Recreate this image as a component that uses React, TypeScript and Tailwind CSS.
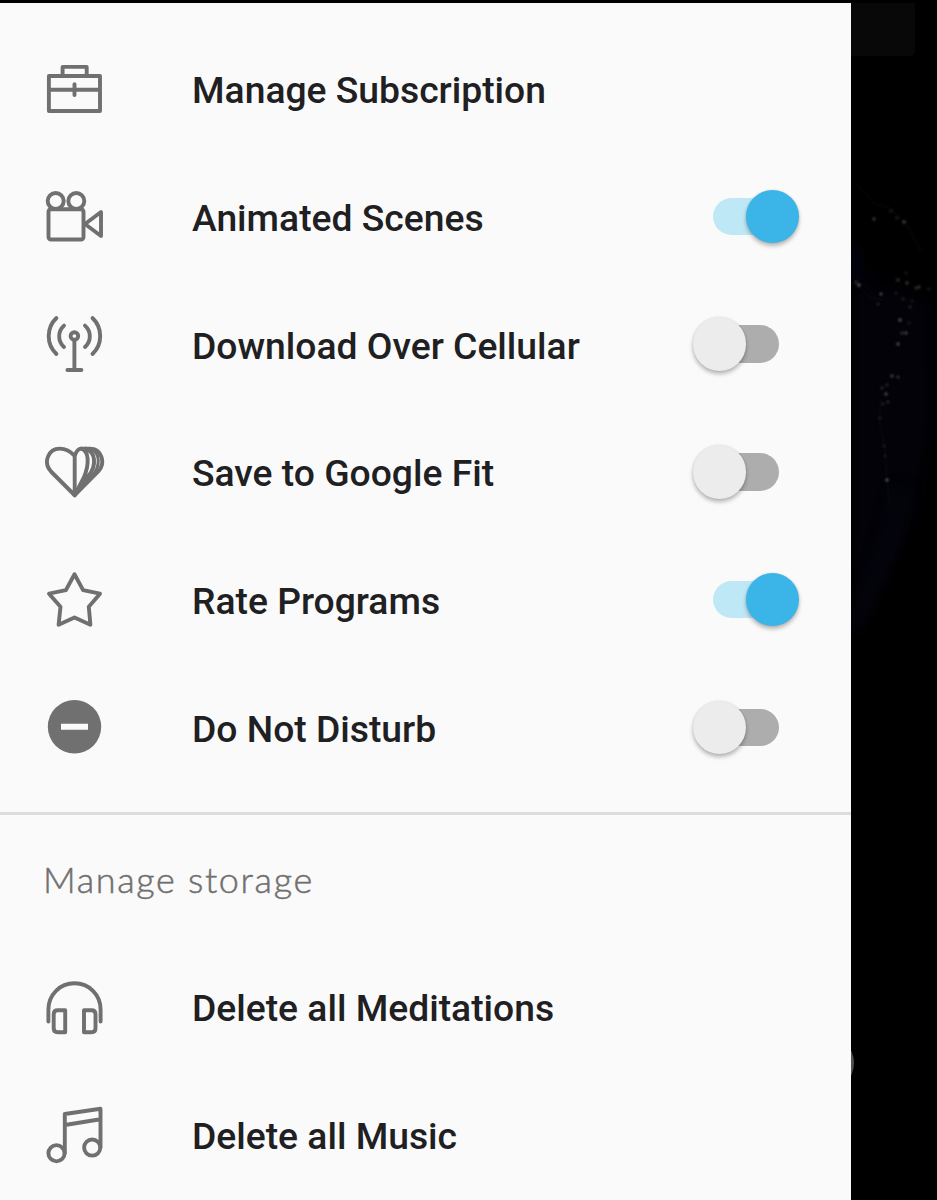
import { useState, type ReactNode } from "react";

const stroke = {
  fill: "none",
  stroke: "#707070",
  strokeWidth: 3.9,
  strokeLinecap: "round" as const,
  strokeLinejoin: "round" as const,
};

function Icon({ top, children }: { top: number; children: ReactNode }) {
  return (
    <svg className="size-16 shrink-0" viewBox={`12 ${top} 64 64`} {...stroke} aria-hidden="true">
      {children}
    </svg>
  );
}

const Briefcase = () => (
  <Icon top={7.5}>
    <path d="M18.9 25.5H70V60.5H18.9ZM18.9 39.3H70M32.6 25V16.4H56.7V25" />
    <path d="M44.5 33.7V44.5" />
  </Icon>
);

const Camera = () => (
  <Icon top={5.25}>
    <circle cx="25.7" cy="21.3" r="8" />
    <circle cx="46.3" cy="21.3" r="8" />
    <rect x="18.5" y="29.5" width="35" height="30.3" rx="2.5" />
    <path d="M55 44.3L71 32.3V56.2Z" />
  </Icon>
);

const Antenna = () => (
  <Icon top={8}>
    <circle cx="44.4" cy="31" r="3.8" />
    <path d="M44.4 35V65M37.4 65H51.4" />
    <path d="M34 20.6A14.3 14.3 0 0 0 34 42M55 20.6A14.3 14.3 0 0 1 55 42" />
    <path d="M26.4 13A24.9 24.9 0 0 0 26.4 49M62.5 13A24.9 24.9 0 0 1 62.5 49" />
  </Icon>
);

const Heart = () => (
  <Icon top={5.75}>
    <path d="M44.7 60L21.2 36.5C12.5 27 18.5 13.4 29.7 13.4C36.5 13.4 41 16.5 44.7 20.8V60L68 36.5C76.5 27 71 13.4 60 13.4H51.2C48.5 13.4 46.2 16 44.7 20.8" />
    <path d="M51.2 13.4C59 15.5 59.5 28.5 54 42L44.7 60M55.5 13.4C66 17 66.5 30 59 40L44.7 60" />
    <path strokeWidth="3" d="M60 13.4C70.5 17.5 71 31 61.5 41L44.7 60" />
  </Icon>
);

const Star = () => (
  <Icon top={8.5}>
    <path d="M44.5 13.8L53.1 29.6L70 33.2L58.8 46.3L60.4 64.2L44.5 57L28.6 64.2L30.5 46.3L19 33.2L35.9 29.6Z" />
  </Icon>
);

const Minus = () => (
  <Icon top={6.25}>
    <circle cx="44.5" cy="37" r="26.7" fill="#707070" stroke="none" />
    <rect x="31" y="34" width="27" height="6" fill="#fafafa" stroke="none" />
  </Icon>
);

const Headphones = () => (
  <Icon top={9.5}>
    <path d="M18.4 55V43.2C18.4 28 30 16.8 44.5 16.8S70.6 28 70.6 43.2V55" />
    <path d="M35.2 43.8V65.7H27.7Q23.7 65.7 23.7 61.7V47.8Q23.7 43.8 27.7 43.8ZM54 43.8V65.7H61.5Q65.5 65.7 65.5 61.7V47.8Q65.5 43.8 61.5 43.8Z" />
  </Icon>
);

const Music = () => (
  <Icon top={7.25}>
    <circle cx="26.5" cy="57.5" r="8.1" />
    <circle cx="62.2" cy="51.8" r="8.1" />
    <path d="M34.8 57.5V18.2L70.5 13V51.8M35 29.2L70.4 23.5" />
  </Icon>
);

function Toggle({ initial, label }: { initial: boolean; label: string }) {
  const [on, setOn] = useState(initial);
  return (
    <button
      role="switch"
      aria-checked={on}
      aria-label={label}
      onClick={() => setOn(!on)}
      className="relative mb-[1.5px] h-[54px] w-[108px] shrink-0"
    >
      <span
        className={`absolute top-[8px] left-[21px] h-[37.5px] w-[66px] rounded-full ${on ? "bg-[#bfe8f6]" : "bg-[#adadad]"}`}
      />
      <span
        className={`absolute top-0 size-[53.4px] rounded-full shadow-[0_3px_4px_rgba(0,0,0,0.27),0_0_2px_rgba(0,0,0,0.12)] ${on ? "left-[54px] bg-[#3bb5e8]" : "left-[0.5px] bg-[#ececec]"}`}
      />
    </button>
  );
}

type Item = { label: string; icon: ReactNode; on?: boolean };

const settings: Item[] = [
  { label: "Manage Subscription", icon: <Briefcase /> },
  { label: "Animated Scenes", icon: <Camera />, on: true },
  { label: "Download Over Cellular", icon: <Antenna />, on: false },
  { label: "Save to Google Fit", icon: <Heart />, on: false },
  { label: "Rate Programs", icon: <Star />, on: true },
  { label: "Do Not Disturb", icon: <Minus />, on: false },
];

const storage: Item[] = [
  { label: "Delete all Meditations", icon: <Headphones /> },
  { label: "Delete all Music", icon: <Music /> },
];

function Row({ label, icon, on }: Item) {
  return (
    <li className="flex h-[127.75px] items-center pr-[51px] pl-[42px]">
      {icon}
      <span className="ml-[86px] flex-1 pt-[2px] text-[37.25px] leading-none font-medium whitespace-nowrap text-[#202022]">
        {label}
      </span>
      {on !== undefined && <Toggle initial={on} label={label} />}
    </li>
  );
}

const lights = [
  [37, 219, 0.35], [60, 218, 0.18], [67, 222, 0.4], [22, 285, 0.55], [44, 294, 0.4],
  [61, 280, 0.3], [70, 283, 0.32], [82, 287, 0.3], [79, 288, 0.25], [92, 289, 0.16],
  [63, 320, 0.5], [69, 333, 0.4], [65, 333, 0.28], [61, 344, 0.45], [55, 376, 0.38],
  [61, 377, 0.28], [49, 394, 0.42], [45, 388, 0.22], [51, 402, 0.22], [46, 404, 0.18],
  [66, 299, 0.18], [73, 307, 0.2], [59, 293, 0.15], [72, 323, 0.15], [50, 480, 0.5],
  [43, 418, 0.15], [47, 446, 0.15], [48, 456, 0.13], [54, 211, 0.17], [41, 304, 0.18],
  [50, 385, 0.2], [19, 282, 0.25], [69, 273, 0.13], [75, 301, 0.12],
];

function NightEarth() {
  return (
    <svg className="h-[700px] w-[86px]" viewBox="14 0 86 700" aria-hidden="true">
      <defs>
        <filter id="haze" x="-50%" y="-30%" width="200%" height="160%" colorInterpolationFilters="sRGB">
          <feGaussianBlur stdDeviation="8" />
        </filter>
        <filter id="glow" x="-100%" y="-100%" width="300%" height="300%" colorInterpolationFilters="sRGB">
          <feGaussianBlur stdDeviation="0.8" />
        </filter>
      </defs>
      <path d="M0 0H78V51Q78 56 73 56H0Z" fill="#080808" />
      <path filter="url(#haze)" fill="#020208" d="M14 240L40 290L62 285L92 300L96 410L80 520L50 580L14 640Z" />
      <path filter="url(#haze)" fill="none" stroke="#05050e" strokeWidth="10" d="M64 490Q58 550 14 632" />
      <path filter="url(#haze)" fill="#04041a" d="M12 235L22 255L16 280H12Z" />
      <path
        filter="url(#glow)"
        fill="none"
        stroke="#0e0e13"
        strokeWidth="1"
        d="M18 183L38 204L52 208L68 222L84 251M18 283L32 297L46 300M44 400L42 420L48 448L50 481L53 506"
      />
      <g filter="url(#glow)" fill="#ada49c">
        {lights.map(([x, y, opacity]) => (
          <circle key={`${x}-${y}`} cx={x} cy={y} r="1.7" opacity={opacity} />
        ))}
      </g>
    </svg>
  );
}

export default function App() {
  return (
    <div className="flex h-[1200px] w-[937px] overflow-hidden bg-black pt-[3px] font-['Roboto',sans-serif]">
      <main className="w-[851px] shrink-0 bg-[#fafafa] pt-[22.8px]">
        <ul>
          {settings.map((item) => (
            <Row key={item.label} {...item} />
          ))}
        </ul>
        <hr className="mt-[19.8px] h-[3px] border-0 bg-[#dcdcdc]" />
        <h2 className="mt-[40.5px] ml-[43px] font-['Lato',sans-serif] text-[36px] leading-[46px] font-light tracking-[1.65px] text-[#707070] [-webkit-text-stroke:0.5px_#707070]">
          Manage storage
        </h2>
        <ul className="mt-[42.1px]">
          {storage.map((item) => (
            <Row key={item.label} {...item} />
          ))}
        </ul>
      </main>
      <aside className="relative w-[86px] shrink-0 overflow-hidden">
        <div className="-mt-[3px]">
          <NightEarth />
        </div>
        <span className="absolute top-[1032px] -left-[53px] size-[56px] rounded-full bg-[#505050]" />
      </aside>
    </div>
  );
}
